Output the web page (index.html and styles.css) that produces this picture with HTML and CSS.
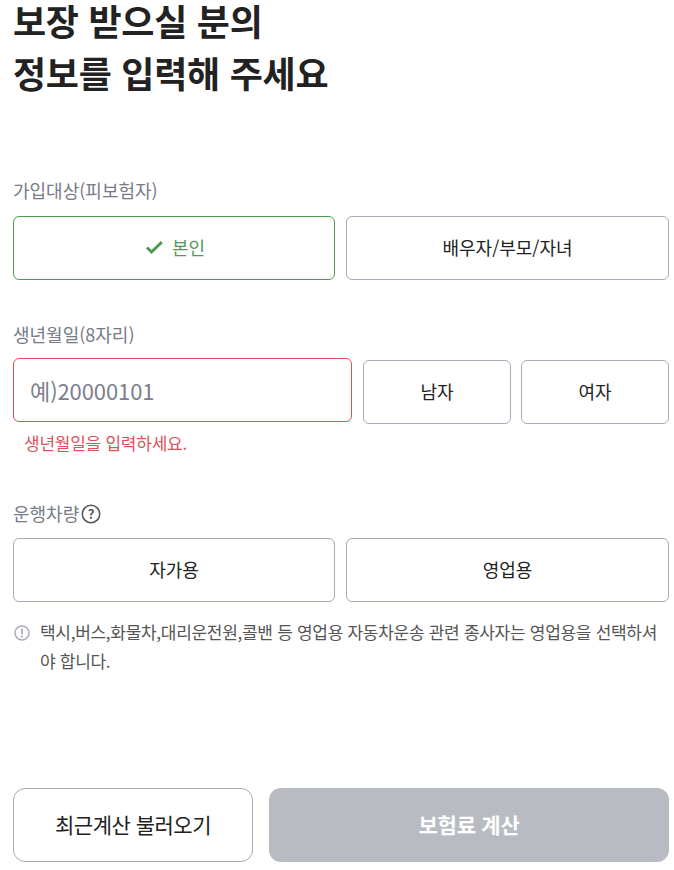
FILE: index.html
```html
<!DOCTYPE html>
<html lang="ko">
<head>
<meta charset="utf-8">
<title>보장 받으실 분의 정보</title>
<link rel="stylesheet" href="styles.css">
</head>
<body>
<main class="page">
  <h1 class="title"><span>보장 받으실 분의</span><span>정보를 입력해 주세요</span></h1>

  <section class="field field-target">
    <div class="label">가입대상(피보험자)</div>
    <div class="row">
      <button class="opt opt-on"><svg class="check" width="20" height="14" viewBox="0 0 20 14"><path d="M4 6.5 L8.5 11 L18.8 1.2" fill="none" stroke="#4f9a56" stroke-width="3"/></svg>본인</button>
      <button class="opt">배우자/부모/자녀</button>
    </div>
  </section>

  <section class="field field-birth">
    <div class="label">생년월일(8자리)</div>
    <div class="row-birth">
      <div class="input">예)20000101</div>
      <div class="genders">
        <button class="opt">남자</button>
        <button class="opt">여자</button>
      </div>
    </div>
    <div class="error">생년월일을 입력하세요.</div>
  </section>

  <section class="field field-car">
    <div class="label label-help">운행차량<svg class="help" width="20" height="20" viewBox="0 0 20 20"><circle cx="10" cy="10" r="8.7" fill="none" stroke="#555" stroke-width="1.5"/><text x="10" y="14.5" text-anchor="middle" class="q">?</text></svg></div>
    <div class="row">
      <button class="opt">자가용</button>
      <button class="opt">영업용</button>
    </div>
    <div class="note">
      <svg class="note-icon" width="16" height="16" viewBox="0 0 16 16"><circle cx="8" cy="8" r="7" fill="none" stroke="#a9adb4" stroke-width="1.5"/><path d="M8 3.8 V9.2 M8 10.6 V12.4" stroke="#a9adb4" stroke-width="1.8" fill="none"/></svg>
      <p>택시,버스,화물차,대리운전원,콜밴 등 영업용 자동차운송 관련 종사자는 영업용을 선택하셔야 합니다.</p>
    </div>
  </section>

  <div class="actions">
    <button class="btn-recent">최근계산 불러오기</button>
    <button class="btn-calc">보험료 계산</button>
  </div>
</main>
</body>
</html>
```

FILE: styles.css
```css
* { box-sizing: border-box; }
html, body { margin: 0; padding: 0; background: #fff; }
body { font-family: "Noto Sans CJK KR", "Noto Sans", sans-serif; color: #222; overflow: hidden; }
.page { width: 674px; height: 870px; padding: 0 5px 0 13px; display: flex; flex-direction: column; }
.title { margin: 0; padding-top: 2px; display: flex; flex-direction: column; gap: 15px; font-size: 36px; line-height: 37px; font-weight: 700; color: #222; letter-spacing: -0.27px; }
.field-target { margin-top: 86px; }
.field-birth { margin-top: 41px; }
.field-car { margin-top: 45px; }
.label { font-size: 18px; line-height: 26px; color: #777b85; margin-bottom: 13px; }
.field-car .label { margin-bottom: 12px; }
.label-help { display: flex; align-items: center; gap: 2px; }
.help { margin-top: 2px; }
.q { font-size: 13px; font-weight: 700; fill: #555; }
.row { display: grid; grid-template-columns: 322px 1fr; gap: 11px; }
.opt { flex: 1; height: 64px; background: #fff; border: 1px solid #a6aab6; border-radius: 6px; font-family: inherit; font-size: 18px; color: #222; display: flex; align-items: center; justify-content: center; padding: 0 0 2px; }
.opt-on { border-color: #4f9a56; color: #4f9a56; }
.check { margin-right: 9px; margin-top: 2px; }
.row-birth { display: flex; gap: 11px; align-items: flex-start; }
.input { width: 339px; height: 64px; margin-top: -2px; border: 1px solid #e0505c; border-radius: 6px; font-size: 22px; letter-spacing: -0.1px; color: #7c8090; padding: 0 0 0 16px; display: flex; align-items: center; }
.genders { flex: 1; display: flex; gap: 10px; }
.error { margin-top: 7px; padding-left: 11px; font-size: 17px; line-height: 24px; color: #e0505c; letter-spacing: -0.25px; }
.note { display: flex; gap: 10px; margin-top: 15px; }
.note-icon { flex: none; margin-top: 8px; margin-left: 1px; }
.note p { margin: 0; font-size: 17px; line-height: 29px; color: #555; letter-spacing: -0.29px; }
.actions { display: flex; gap: 16px; margin-top: auto; margin-bottom: 8px; }
.btn-recent { width: 240px; height: 74px; background: #fff; border: 1px solid #a6aab6; border-radius: 12px; font-family: inherit; font-size: 21px; color: #222; letter-spacing: -0.5px; padding: 0 0 2px; }
.btn-calc { flex: 1; height: 74px; background: #b8bcc2; border: 0; border-radius: 12px; font-family: inherit; font-size: 21px; font-weight: 700; color: #fff; letter-spacing: -0.25px; padding: 0 0 2px; }
```
